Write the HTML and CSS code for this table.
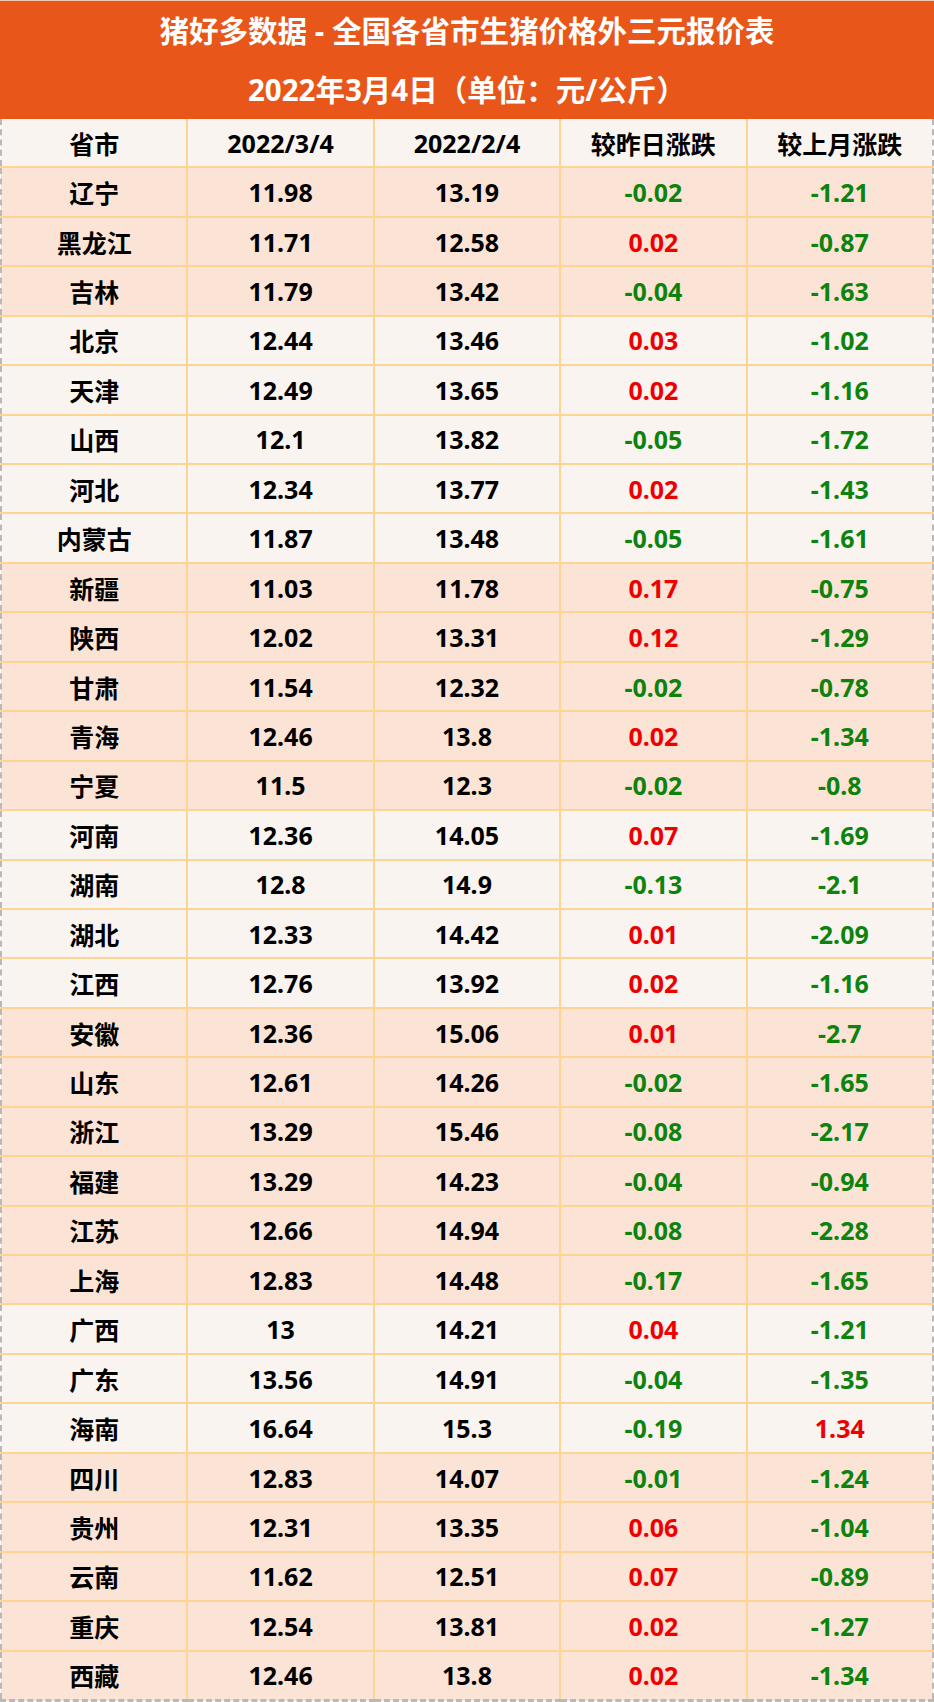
FILE: index.html
```html
<!DOCTYPE html>
<html lang="zh-CN">
<head>
<meta charset="utf-8">
<title>猪好多数据</title>
<link rel="stylesheet" href="styles.css">
</head>
<body>
<div class="sheet">
  <div class="title">
    <div class="title-line">猪好多数据 - 全国各省市生猪价格外三元报价表</div>
    <div class="title-line">2022年3月4日（单位：元/公斤）</div>
  </div>
  <table class="grid">
    <colgroup><col><col><col><col><col></colgroup>
    <tr class="light"><td>省市</td><td>2022/3/4</td><td>2022/2/4</td><td>较昨日涨跌</td><td>较上月涨跌</td></tr>
    <tr class="pink"><td>辽宁</td><td>11.98</td><td>13.19</td><td class="dn">-0.02</td><td class="dn">-1.21</td></tr>
    <tr class="pink"><td>黑龙江</td><td>11.71</td><td>12.58</td><td class="up">0.02</td><td class="dn">-0.87</td></tr>
    <tr class="pink"><td>吉林</td><td>11.79</td><td>13.42</td><td class="dn">-0.04</td><td class="dn">-1.63</td></tr>
    <tr class="light"><td>北京</td><td>12.44</td><td>13.46</td><td class="up">0.03</td><td class="dn">-1.02</td></tr>
    <tr class="light"><td>天津</td><td>12.49</td><td>13.65</td><td class="up">0.02</td><td class="dn">-1.16</td></tr>
    <tr class="light"><td>山西</td><td>12.1</td><td>13.82</td><td class="dn">-0.05</td><td class="dn">-1.72</td></tr>
    <tr class="light"><td>河北</td><td>12.34</td><td>13.77</td><td class="up">0.02</td><td class="dn">-1.43</td></tr>
    <tr class="light"><td>内蒙古</td><td>11.87</td><td>13.48</td><td class="dn">-0.05</td><td class="dn">-1.61</td></tr>
    <tr class="pink"><td>新疆</td><td>11.03</td><td>11.78</td><td class="up">0.17</td><td class="dn">-0.75</td></tr>
    <tr class="pink"><td>陕西</td><td>12.02</td><td>13.31</td><td class="up">0.12</td><td class="dn">-1.29</td></tr>
    <tr class="pink"><td>甘肃</td><td>11.54</td><td>12.32</td><td class="dn">-0.02</td><td class="dn">-0.78</td></tr>
    <tr class="pink"><td>青海</td><td>12.46</td><td>13.8</td><td class="up">0.02</td><td class="dn">-1.34</td></tr>
    <tr class="pink"><td>宁夏</td><td>11.5</td><td>12.3</td><td class="dn">-0.02</td><td class="dn">-0.8</td></tr>
    <tr class="light"><td>河南</td><td>12.36</td><td>14.05</td><td class="up">0.07</td><td class="dn">-1.69</td></tr>
    <tr class="light"><td>湖南</td><td>12.8</td><td>14.9</td><td class="dn">-0.13</td><td class="dn">-2.1</td></tr>
    <tr class="light"><td>湖北</td><td>12.33</td><td>14.42</td><td class="up">0.01</td><td class="dn">-2.09</td></tr>
    <tr class="light"><td>江西</td><td>12.76</td><td>13.92</td><td class="up">0.02</td><td class="dn">-1.16</td></tr>
    <tr class="pink"><td>安徽</td><td>12.36</td><td>15.06</td><td class="up">0.01</td><td class="dn">-2.7</td></tr>
    <tr class="pink"><td>山东</td><td>12.61</td><td>14.26</td><td class="dn">-0.02</td><td class="dn">-1.65</td></tr>
    <tr class="pink"><td>浙江</td><td>13.29</td><td>15.46</td><td class="dn">-0.08</td><td class="dn">-2.17</td></tr>
    <tr class="pink"><td>福建</td><td>13.29</td><td>14.23</td><td class="dn">-0.04</td><td class="dn">-0.94</td></tr>
    <tr class="pink"><td>江苏</td><td>12.66</td><td>14.94</td><td class="dn">-0.08</td><td class="dn">-2.28</td></tr>
    <tr class="pink"><td>上海</td><td>12.83</td><td>14.48</td><td class="dn">-0.17</td><td class="dn">-1.65</td></tr>
    <tr class="light"><td>广西</td><td>13</td><td>14.21</td><td class="up">0.04</td><td class="dn">-1.21</td></tr>
    <tr class="light"><td>广东</td><td>13.56</td><td>14.91</td><td class="dn">-0.04</td><td class="dn">-1.35</td></tr>
    <tr class="light"><td>海南</td><td>16.64</td><td>15.3</td><td class="dn">-0.19</td><td class="up">1.34</td></tr>
    <tr class="pink"><td>四川</td><td>12.83</td><td>14.07</td><td class="dn">-0.01</td><td class="dn">-1.24</td></tr>
    <tr class="pink"><td>贵州</td><td>12.31</td><td>13.35</td><td class="up">0.06</td><td class="dn">-1.04</td></tr>
    <tr class="pink"><td>云南</td><td>11.62</td><td>12.51</td><td class="up">0.07</td><td class="dn">-0.89</td></tr>
    <tr class="pink"><td>重庆</td><td>12.54</td><td>13.81</td><td class="up">0.02</td><td class="dn">-1.27</td></tr>
    <tr class="pink"><td>西藏</td><td>12.46</td><td>13.8</td><td class="up">0.02</td><td class="dn">-1.34</td></tr>
  </table>
</div>
</body>
</html>
```

FILE: styles.css
```css
html, body {
  margin: 0;
  padding: 0;
  background: #ffffff;
}

.sheet {
  width: 934px;
  font-family: "Noto Sans", "Noto Sans CJK SC", sans-serif;
  font-weight: 700;
}

.title {
  height: 119px;
  background: #e8561a;
  color: #ffffff;
  font-size: 29.5px;
  text-align: center;
  border-top: 1px solid #f3c6ae;
  box-sizing: border-box;
}

.title-line {
  height: 59px;
  line-height: 59px;
  white-space: nowrap;
}

.grid {
  width: 934px;
  height: 1583px;
  table-layout: fixed;
  border-collapse: collapse;
  border-left: 2px dashed #b9b9b9;
  border-right: 2px dashed #b9b9b9;
  border-bottom: 3px dashed #b9b9b9;
  font-size: 25px;
  color: #000000;
}

.grid td {
  height: 46px;
  padding: 0;
  text-align: center;
  vertical-align: middle;
  border: 2px solid #fdd491;
  white-space: nowrap;
}

.grid tr td:first-child {
  border-left: 2px dashed #b9b9b9;
}

.grid tr td:last-child {
  border-right: 2px dashed #b9b9b9;
}

.grid tr:first-child td {
  border-top: none;
}

.grid tr:last-child td {
  border-bottom: 3px dashed #b9b9b9;
}

.pink td {
  background: #fbe4d6;
}

.light td {
  background: #f9f4f0;
}

.grid td.up {
  color: #ee0000;
}

.grid td.dn {
  color: #0d820d;
}
```
